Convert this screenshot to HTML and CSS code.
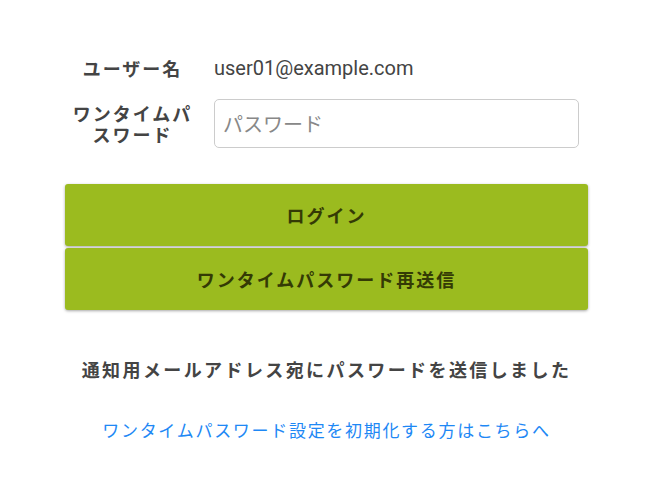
FILE: index.html
```html
<!DOCTYPE html>
<html lang="ja">
<head>
<meta charset="utf-8">
<title>ログイン</title>
<link rel="stylesheet" href="styles.css">
</head>
<body>
<main class="page">
  <div class="form">
    <div class="row row-user">
      <div class="label">ユーザー名</div>
      <div class="value">user01@example.com</div>
    </div>
    <div class="row row-pass">
      <div class="label">ワンタイムパスワード</div>
      <input class="input" type="password" placeholder="パスワード">
    </div>
    <div class="buttons">
      <button class="btn">ログイン</button>
      <button class="btn">ワンタイムパスワード再送信</button>
    </div>
    <p class="notice">通知用メールアドレス宛にパスワードを送信しました</p>
    <a class="link" href="#">ワンタイムパスワード設定を初期化する方はこちらへ</a>
  </div>
</main>
</body>
</html>
```
FILE: styles.css
```css
html, body {
  margin: 0;
  padding: 0;
  background: #fff;
}
body {
  font-family: "Noto Sans CJK JP", "Noto Sans", sans-serif;
  color: #444;
}
.page {
  display: flex;
  justify-content: center;
  padding-top: 51px;
  padding-right: 2px;
}
.form {
  width: 523px;
  display: flex;
  flex-direction: column;
  align-items: center;
}
.row {
  width: 100%;
  display: flex;
  align-items: center;
  gap: 14px;
}
.row-user {
  height: 34px;
}
.row-pass {
  margin-top: 14px;
}
.label {
  width: 135px;
  flex: none;
  text-align: center;
  font-weight: bold;
  font-size: 18px;
  letter-spacing: 2px;
  line-height: 21px;
  color: #444;
}
.value {
  font-family: "Roboto", "Noto Sans", sans-serif;
  font-size: 20px;
  color: #444;
}
.input {
  width: 365px;
  height: 49px;
  box-sizing: border-box;
  border: 1px solid #ccc;
  border-radius: 5px;
  padding: 0 8px;
  font-family: "Noto Sans CJK JP", sans-serif;
  font-size: 20px;
  color: #444;
  outline: none;
}
.input::placeholder {
  color: #888;
}
.buttons {
  width: 100%;
  margin-top: 36px;
  display: flex;
  flex-direction: column;
  gap: 2px;
}
.btn {
  width: 100%;
  height: 62px;
  border: none;
  border-radius: 3px;
  background: #9bbb1f;
  box-shadow: 0 1px 3px rgba(0,0,0,0.35);
  font-family: "Noto Sans CJK JP", sans-serif;
  font-weight: bold;
  font-size: 18px;
  letter-spacing: 2px;
  color: #343a05;
  cursor: pointer;
  padding: 0;
}
.notice {
  margin: 46px 0 0;
  font-weight: bold;
  font-size: 18px;
  letter-spacing: 2.4px;
  color: #444;
  line-height: 26px;
}
.link {
  margin-top: 36px;
  font-size: 17px;
  letter-spacing: 1.7px;
  color: #1e88f5;
  text-decoration: none;
  line-height: 24px;
}
```
